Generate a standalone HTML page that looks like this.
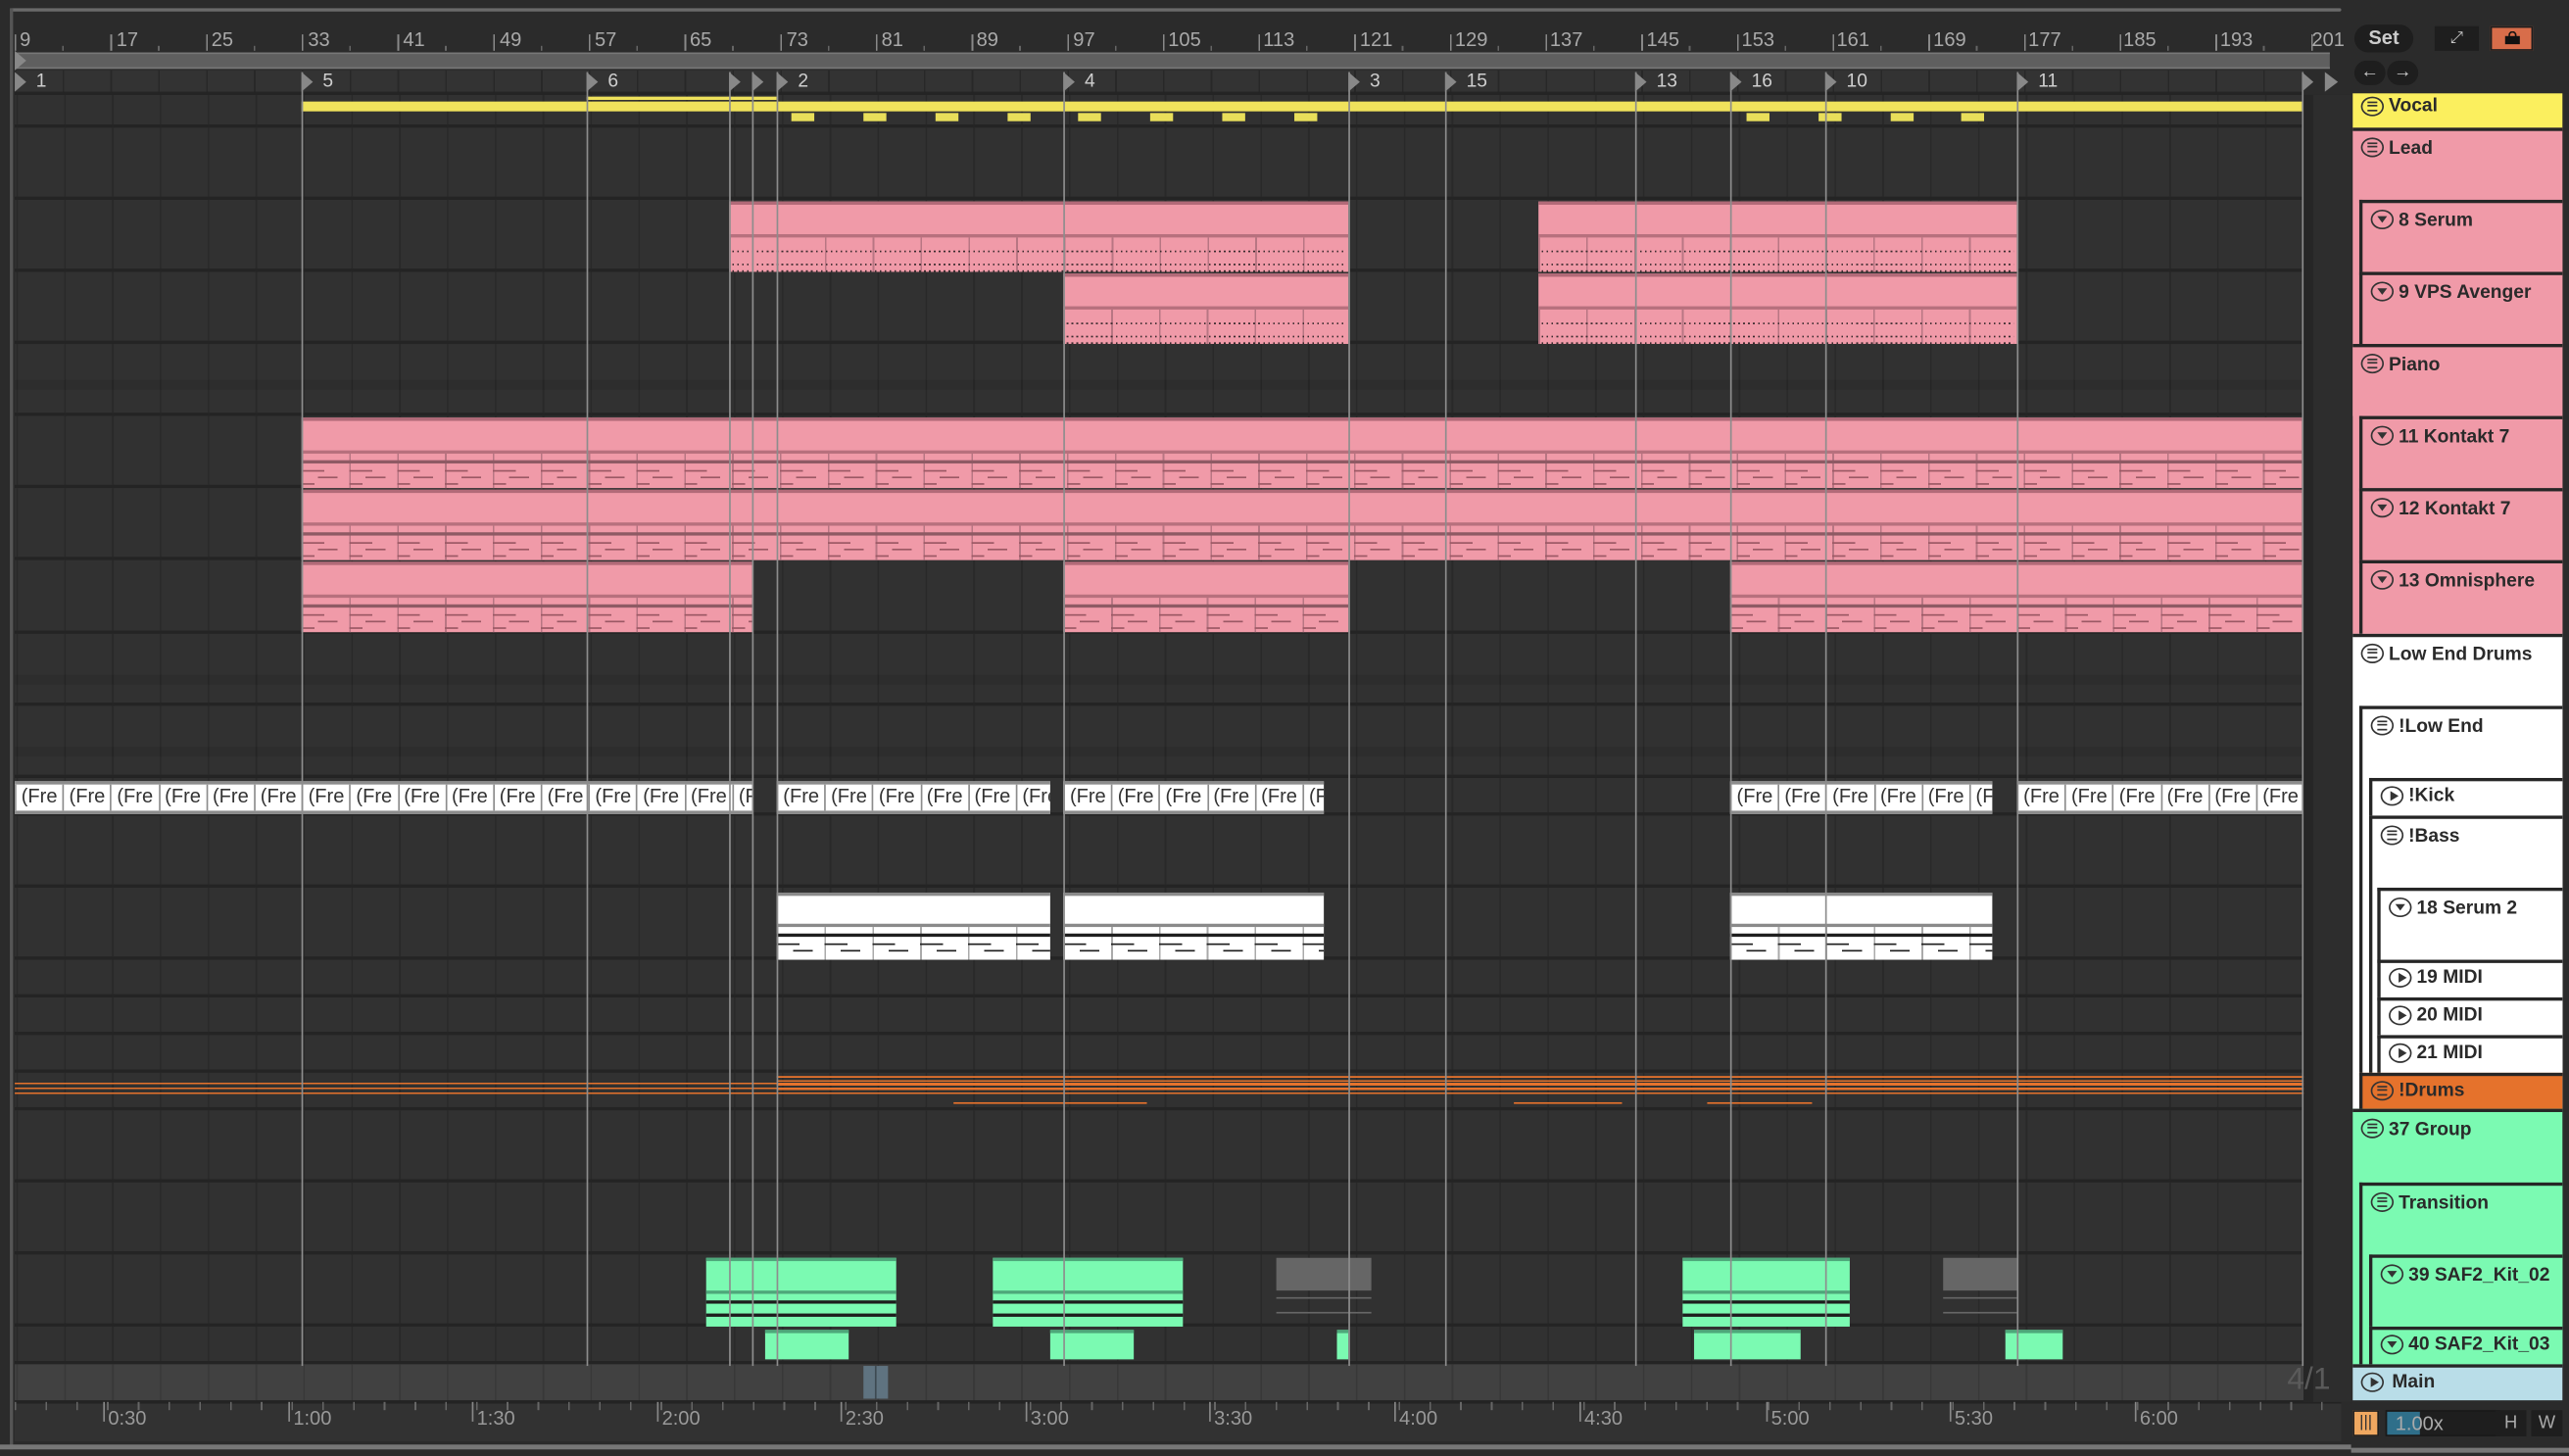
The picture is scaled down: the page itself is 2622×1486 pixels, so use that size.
<!DOCTYPE html>
<html><head><meta charset="utf-8">
<style>
*{margin:0;padding:0;box-sizing:border-box}
html,body{width:2622px;height:1486px;overflow:hidden;background:#2a2a2a}
#w{position:absolute;left:0;top:0;width:1568px;height:889px;transform:scale(1.67219,1.67154);transform-origin:0 0;background:#2b2b2b;font-family:"Liberation Sans",sans-serif}
.a{position:absolute}
.num{position:absolute;top:17px;font-family:"Liberation Sans Narrow","Liberation Sans",sans-serif;font-size:12px;color:#a9a9a9}
.row{position:absolute;left:9px;width:1397px;background:#313131;border-bottom:2px solid #242424;
 background-image:repeating-linear-gradient(90deg,#292929 0 1px,transparent 1px 29.2px);background-position:1px 0}
.loc{position:absolute;top:44px;width:1px;height:790px;background:#8d8d8d}
.pk{position:absolute;background:#f09aa8;border-top:2px solid #b26a78}
.pk .b{position:absolute;left:0;right:0;top:18px;bottom:0;border-top:2px solid #b7707d;
 background-image:repeating-linear-gradient(90deg,#b87683 0 1px,transparent 1px 29.2px)}
.dots{position:absolute;left:2px;right:2px;height:1px;background:repeating-linear-gradient(90deg,#3a2a2e 0 1px,transparent 1px 3px)}
.notes{position:absolute;left:0;right:0;top:4px;bottom:2px;background:
 repeating-linear-gradient(90deg,#9b5864 0 14px,transparent 14px 29.2px) 0 4px/100% 1px no-repeat,
 repeating-linear-gradient(90deg,transparent 0 10px,#9b5864 10px 22px,transparent 22px 29.2px) 0 8px/100% 1px no-repeat,
 repeating-linear-gradient(90deg,#9b5864 0 8px,transparent 8px 29.2px) 0 12px/100% 1px no-repeat,
 repeating-linear-gradient(90deg,transparent 0 16px,#9b5864 16px 26px,transparent 26px 29.2px) 0 16px/100% 1px no-repeat;
 border-top:2px solid #8e5a64}
.wh{position:absolute;background:#fff;border-top:2px solid #8a8a8a}
.fre{position:absolute;top:477px;height:20px;background:#fff;border-top:2px solid #8c8c8c;border-bottom:2px solid #8c8c8c;overflow:hidden;white-space:nowrap;display:flex}
.fre span{flex:0 0 29.2px;border-left:1px solid #8c8c8c;font-size:12px;color:#333;padding-left:3px;line-height:15px;overflow:hidden}
.gr{position:absolute;background:#7bfab2;border-top:2px solid #4ea77a}
.yb{position:absolute;top:69px;height:5px;width:14px;background:#e9df5a}
.tl{position:absolute;top:859px;font-family:"Liberation Sans Narrow","Liberation Sans",sans-serif;font-size:12px;color:#999}
.tl:before{content:"";position:absolute;left:-3px;top:-3px;width:1px;height:12px;background:#888}
.ph{position:absolute;height:44px;border-top:2px solid #262626;font-size:11.5px;font-weight:bold;color:#2a2a2a;padding:5px 0 0 22px;white-space:nowrap;overflow:hidden}
.ph.s{height:23px;padding-top:3px}
.ic{position:absolute;left:5px;top:4px;width:14px;height:12px;border:1.3px solid #333;border-radius:50%}
.s .ic{top:3px}
.ic.g:after{content:"";position:absolute;left:3px;top:2px;width:6px;height:4px;border-top:1px solid #333;border-bottom:1px solid #333}
.ic.g:before{content:"";position:absolute;left:3px;top:4px;width:6px;height:1px;background:#333}
.ic.d:after{content:"";position:absolute;left:3px;top:3px;border-left:3.5px solid transparent;border-right:3.5px solid transparent;border-top:4px solid #333}
.ic.p:after{content:"";position:absolute;left:4.5px;top:2px;border-top:3.5px solid transparent;border-bottom:3.5px solid transparent;border-left:5px solid #333}
</style></head><body><div id="w">

<div class="a" style="left:6px;top:5px;width:1423px;height:2px;background:#6a6a6a;border-radius:3px"></div>
<div class="a" style="left:6px;top:5px;width:2px;height:880px;background:#555"></div>
<div class="a" style="left:9px;top:32px;width:1413px;height:10px;background:#5f5f5f;border-top:1px solid #777;border-bottom:1px solid #777"></div>
<div class="a" style="left:9px;top:31px;width:0;height:0;border-top:6px solid transparent;border-bottom:6px solid transparent;border-left:7px solid #888"></div>

<div class="num" style="left:12px">9</div><div class="num" style="left:71px">17</div><div class="num" style="left:129px">25</div><div class="num" style="left:188px">33</div><div class="num" style="left:246px">41</div><div class="num" style="left:305px">49</div><div class="num" style="left:363px">57</div><div class="num" style="left:421px">65</div><div class="num" style="left:480px">73</div><div class="num" style="left:538px">81</div><div class="num" style="left:596px">89</div><div class="num" style="left:655px">97</div><div class="num" style="left:713px">105</div><div class="num" style="left:771px">113</div><div class="num" style="left:830px">121</div><div class="num" style="left:888px">129</div><div class="num" style="left:946px">137</div><div class="num" style="left:1005px">145</div><div class="num" style="left:1063px">153</div><div class="num" style="left:1121px">161</div><div class="num" style="left:1180px">169</div><div class="num" style="left:1238px">177</div><div class="num" style="left:1296px">185</div><div class="num" style="left:1355px">193</div><div class="num" style="left:1411px">201</div>
<div class="a" style="left:9px;top:21px;width:1415px;height:10px;background:repeating-linear-gradient(90deg,#888 0 1px,transparent 1px 58.4px),repeating-linear-gradient(90deg,transparent 0 29px,#666 29px 30px,transparent 30px 58.4px);background-size:100% 10px,100% 3px;background-position:0 0,0 7px;background-repeat:no-repeat"></div>

<div class="a" style="left:9px;top:43px;width:1397px;height:14px;background:#333;background-image:repeating-linear-gradient(90deg,#282828 0 1px,transparent 1px 29.2px)"></div>
<div class="a" style="left:9px;top:56px;width:1397px;height:2px;background:#242424"></div>

<div class="row" style="top:58px;height:20px"></div>
<div class="row" style="top:78px;height:44px"></div>
<div class="row" style="top:122px;height:44px"></div>
<div class="row" style="top:166px;height:44px"></div>
<div class="row" style="top:210px;height:44px"></div>
<div class="row" style="top:254px;height:44px"></div>
<div class="row" style="top:298px;height:44px"></div>
<div class="row" style="top:342px;height:45px"></div>
<div class="row" style="top:387px;height:44px"></div>
<div class="row" style="top:431px;height:44px"></div>
<div class="row" style="top:475px;height:23px"></div>
<div class="row" style="top:498px;height:44px"></div>
<div class="row" style="top:542px;height:44px"></div>
<div class="row" style="top:586px;height:23px"></div>
<div class="row" style="top:609px;height:23px"></div>
<div class="row" style="top:632px;height:23px"></div>
<div class="row" style="top:655px;height:23px"></div>
<div class="row" style="top:678px;height:44px"></div>
<div class="row" style="top:722px;height:44px"></div>
<div class="row" style="top:766px;height:44px"></div>
<div class="row" style="top:810px;height:23px"></div>
<div class="row" style="top:833px;height:23px;background-color:#414141;background-image:repeating-linear-gradient(90deg,#383838 0 1px,transparent 1px 29.2px);border-bottom:none"></div>
<div class="a" style="left:9px;top:855px;width:1420px;height:25px;background:#323232;border-top:2px solid #232323"></div>
<div class="a" style="left:9px;top:232px;width:1397px;height:6px;background:rgba(0,0,0,.08)"></div>
<div class="a" style="left:9px;top:412px;width:1397px;height:6px;background:rgba(0,0,0,.08)"></div>
<div class="a" style="left:9px;top:456px;width:1397px;height:6px;background:rgba(0,0,0,.08)"></div>

<div class="a" style="left:1406px;top:58px;width:29px;height:798px;background:#2d2d2d;background-image:linear-gradient(90deg,#262626 0 6px,transparent 6px)"></div>
<div class="a" style="left:1419px;top:44px;width:0;height:0;border-top:6px solid transparent;border-bottom:6px solid transparent;border-left:8px solid #888"></div>

<div class="a" style="left:184px;top:62px;width:1221px;height:6px;background:#f0e35c"></div>
<div class="a" style="left:358px;top:59px;width:116px;height:2px;background:#f0e35c"></div>
<div class="yb" style="left:483px"></div><div class="yb" style="left:527px"></div><div class="yb" style="left:571px"></div><div class="yb" style="left:615px"></div><div class="yb" style="left:658px"></div><div class="yb" style="left:702px"></div><div class="yb" style="left:746px"></div><div class="yb" style="left:790px"></div><div class="yb" style="left:1066px"></div><div class="yb" style="left:1110px"></div><div class="yb" style="left:1154px"></div><div class="yb" style="left:1197px"></div>

<div class="pk" style="left:445px;top:123px;width:378px;height:43px"><div class="b"><div class="dots" style="top:8px"></div><div class="dots" style="top:16px"></div><div class="dots" style="top:20px"></div></div></div>
<div class="pk" style="left:939px;top:123px;width:292px;height:43px"><div class="b"><div class="dots" style="top:8px"></div><div class="dots" style="top:16px"></div><div class="dots" style="top:20px"></div></div></div>
<div class="pk" style="left:649px;top:167px;width:174px;height:43px"><div class="b"><div class="dots" style="top:8px"></div><div class="dots" style="top:16px"></div><div class="dots" style="top:20px"></div></div></div>
<div class="pk" style="left:939px;top:167px;width:292px;height:43px"><div class="b"><div class="dots" style="top:8px"></div><div class="dots" style="top:16px"></div><div class="dots" style="top:20px"></div></div></div>
<div class="pk" style="left:184px;top:255px;width:1221px;height:43px"><div class="b"><div class="notes"></div></div></div>
<div class="pk" style="left:184px;top:299px;width:1221px;height:43px"><div class="b"><div class="notes"></div></div></div>
<div class="pk" style="left:184px;top:343px;width:275px;height:43px"><div class="b"><div class="notes"></div></div></div>
<div class="pk" style="left:649px;top:343px;width:174px;height:43px"><div class="b"><div class="notes"></div></div></div>
<div class="pk" style="left:1056px;top:343px;width:349px;height:43px"><div class="b"><div class="notes"></div></div></div>

<div class="fre" style="left:9px;width:450px"><span>(Fre</span><span>(Fre</span><span>(Fre</span><span>(Fre</span><span>(Fre</span><span>(Fre</span><span>(Fre</span><span>(Fre</span><span>(Fre</span><span>(Fre</span><span>(Fre</span><span>(Fre</span><span>(Fre</span><span>(Fre</span><span>(Fre</span><span>(Fre</span></div>
<div class="fre" style="left:474px;width:167px"><span>(Fre</span><span>(Fre</span><span>(Fre</span><span>(Fre</span><span>(Fre</span><span>(Fre</span></div>
<div class="fre" style="left:649px;width:159px"><span>(Fre</span><span>(Fre</span><span>(Fre</span><span>(Fre</span><span>(Fre</span><span>(Fre</span></div>
<div class="fre" style="left:1056px;width:160px"><span>(Fre</span><span>(Fre</span><span>(Fre</span><span>(Fre</span><span>(Fre</span><span>(Fre</span></div>
<div class="fre" style="left:1231px;width:174px"><span>(Fre</span><span>(Fre</span><span>(Fre</span><span>(Fre</span><span>(Fre</span><span>(Fre</span></div>

<div class="wh" style="left:474px;top:545px;width:167px;height:41px"><div class="a" style="left:0;right:0;top:17px;bottom:0;border-top:2px solid #8a8a8a;background-image:repeating-linear-gradient(90deg,#aaa 0 1px,transparent 1px 29.2px)"><div class="notes" style="filter:grayscale(1) brightness(.3)"></div></div></div>
<div class="wh" style="left:649px;top:545px;width:159px;height:41px"><div class="a" style="left:0;right:0;top:17px;bottom:0;border-top:2px solid #8a8a8a;background-image:repeating-linear-gradient(90deg,#aaa 0 1px,transparent 1px 29.2px)"><div class="notes" style="filter:grayscale(1) brightness(.3)"></div></div></div>
<div class="wh" style="left:1056px;top:545px;width:160px;height:41px"><div class="a" style="left:0;right:0;top:17px;bottom:0;border-top:2px solid #8a8a8a;background-image:repeating-linear-gradient(90deg,#aaa 0 1px,transparent 1px 29.2px)"><div class="notes" style="filter:grayscale(1) brightness(.3)"></div></div></div>

<div class="a" style="left:9px;top:661px;width:1397px;height:7px;background:repeating-linear-gradient(180deg,#e5722c 0 1px,transparent 1px 3px)"></div>
<div class="a" style="left:474px;top:657px;width:932px;height:12px;background:repeating-linear-gradient(180deg,#e5722c 0 1px,transparent 1px 2.5px)"></div>
<div class="a" style="left:582px;top:673px;width:118px;height:1px;background:#e5722c"></div>
<div class="a" style="left:924px;top:673px;width:66px;height:1px;background:#e5722c"></div>
<div class="a" style="left:1042px;top:673px;width:64px;height:1px;background:#e5722c"></div>

<div class="gr" style="left:431px;top:768px;width:116px;height:42px"><div class="a" style="left:0;right:0;top:18px;height:2px;background:#4ea77a"></div><div class="a" style="left:0;right:0;top:24px;height:2px;background:#1d1d1d"></div><div class="a" style="left:0;right:0;top:32px;height:2px;background:#1d1d1d"></div></div>
<div class="gr" style="left:606px;top:768px;width:116px;height:42px"><div class="a" style="left:0;right:0;top:18px;height:2px;background:#4ea77a"></div><div class="a" style="left:0;right:0;top:24px;height:2px;background:#1d1d1d"></div><div class="a" style="left:0;right:0;top:32px;height:2px;background:#1d1d1d"></div></div>
<div class="gr" style="left:1027px;top:768px;width:102px;height:42px"><div class="a" style="left:0;right:0;top:18px;height:2px;background:#4ea77a"></div><div class="a" style="left:0;right:0;top:24px;height:2px;background:#1d1d1d"></div><div class="a" style="left:0;right:0;top:32px;height:2px;background:#1d1d1d"></div></div>
<div class="a" style="left:779px;top:768px;width:58px;height:20px;background:#666"></div>
<div class="a" style="left:779px;top:792px;width:58px;height:1px;background:#666"></div><div class="a" style="left:779px;top:801px;width:58px;height:1px;background:#666"></div>
<div class="a" style="left:1186px;top:768px;width:45px;height:20px;background:#666"></div>
<div class="a" style="left:1186px;top:792px;width:45px;height:1px;background:#666"></div><div class="a" style="left:1186px;top:801px;width:45px;height:1px;background:#666"></div>
<div class="gr" style="left:467px;top:812px;width:51px;height:18px"></div>
<div class="gr" style="left:641px;top:812px;width:51px;height:18px"></div>
<div class="gr" style="left:816px;top:812px;width:7px;height:18px"></div>
<div class="gr" style="left:1034px;top:812px;width:65px;height:18px"></div>
<div class="gr" style="left:1224px;top:812px;width:35px;height:18px"></div>

<div class="a" style="left:527px;top:834px;width:15px;height:20px;background:#5f7380"></div>
<div class="a" style="left:534px;top:834px;width:1px;height:20px;background:#3d4a52"></div>

<div class="loc" style="left:184px"></div><div class="loc" style="left:358px"></div><div class="loc" style="left:445px"></div><div class="loc" style="left:459px"></div><div class="loc" style="left:474px"></div><div class="loc" style="left:649px"></div><div class="loc" style="left:823px"></div><div class="loc" style="left:882px"></div><div class="loc" style="left:998px"></div><div class="loc" style="left:1056px"></div><div class="loc" style="left:1114px"></div><div class="loc" style="left:1231px"></div><div class="loc" style="left:1405px"></div>
<div class="a" style="left:0;top:44px;width:1420px;height:13px;font-size:11.5px;color:#cfcfcf;font-family:'Liberation Sans Narrow','Liberation Sans',sans-serif">
<span class="a" style="left:9px;top:0;border-top:6px solid transparent;border-bottom:6px solid transparent;border-left:7px solid #888"></span><span class="a" style="left:22px;top:0">1</span>
<span class="a" style="left:184px;top:0;border-top:6px solid transparent;border-bottom:6px solid transparent;border-left:7px solid #888"></span><span class="a" style="left:197px;top:0">5</span>
<span class="a" style="left:358px;top:0;border-top:6px solid transparent;border-bottom:6px solid transparent;border-left:7px solid #888"></span><span class="a" style="left:371px;top:0">6</span>
<span class="a" style="left:445px;top:0;border-top:6px solid transparent;border-bottom:6px solid transparent;border-left:7px solid #888"></span>
<span class="a" style="left:459px;top:0;border-top:6px solid transparent;border-bottom:6px solid transparent;border-left:7px solid #888"></span>
<span class="a" style="left:474px;top:0;border-top:6px solid transparent;border-bottom:6px solid transparent;border-left:7px solid #888"></span><span class="a" style="left:487px;top:0">2</span>
<span class="a" style="left:649px;top:0;border-top:6px solid transparent;border-bottom:6px solid transparent;border-left:7px solid #888"></span><span class="a" style="left:662px;top:0">4</span>
<span class="a" style="left:823px;top:0;border-top:6px solid transparent;border-bottom:6px solid transparent;border-left:7px solid #888"></span><span class="a" style="left:836px;top:0">3</span>
<span class="a" style="left:882px;top:0;border-top:6px solid transparent;border-bottom:6px solid transparent;border-left:7px solid #888"></span><span class="a" style="left:895px;top:0">15</span>
<span class="a" style="left:998px;top:0;border-top:6px solid transparent;border-bottom:6px solid transparent;border-left:7px solid #888"></span><span class="a" style="left:1011px;top:0">13</span>
<span class="a" style="left:1056px;top:0;border-top:6px solid transparent;border-bottom:6px solid transparent;border-left:7px solid #888"></span><span class="a" style="left:1069px;top:0">16</span>
<span class="a" style="left:1114px;top:0;border-top:6px solid transparent;border-bottom:6px solid transparent;border-left:7px solid #888"></span><span class="a" style="left:1127px;top:0">10</span>
<span class="a" style="left:1231px;top:0;border-top:6px solid transparent;border-bottom:6px solid transparent;border-left:7px solid #888"></span><span class="a" style="left:1244px;top:0">11</span>
<span class="a" style="left:1405px;top:0;border-top:6px solid transparent;border-bottom:6px solid transparent;border-left:7px solid #888"></span>
</div>

<div class="a" style="left:9px;top:856px;width:1420px;height:5px;background:repeating-linear-gradient(90deg,#666 0 1px,transparent 1px 18.77px)"></div>
<div class="tl" style="left:66px">0:30</div><div class="tl" style="left:179px">1:00</div><div class="tl" style="left:291px">1:30</div><div class="tl" style="left:404px">2:00</div><div class="tl" style="left:516px">2:30</div><div class="tl" style="left:629px">3:00</div><div class="tl" style="left:741px">3:30</div><div class="tl" style="left:854px">4:00</div><div class="tl" style="left:967px">4:30</div><div class="tl" style="left:1081px">5:00</div><div class="tl" style="left:1193px">5:30</div><div class="tl" style="left:1306px">6:00</div>
<div class="a" style="left:0;top:882px;width:1435px;height:3px;background:#777"></div>
<div class="a" style="left:1396px;top:832px;font-size:19px;color:#5a5a5a">4/1</div>

<div class="a" style="left:1437px;top:15px;width:36px;height:17px;border-radius:9px;background:#1e1e1e;color:#ccc;font-size:12px;font-weight:bold;text-align:center;line-height:17px">Set</div>
<div class="a" style="left:1486px;top:16px;width:27px;height:15px;background:#1e1e1e;color:#ccc;font-size:10px;text-align:center;line-height:15px">⤢</div>
<div class="a" style="left:1520px;top:16px;width:26px;height:15px;background:#d86d4a;border:1.5px solid #1e1e1e"><div class="a" style="left:8px;top:5px;width:9px;height:5px;background:#111"></div><div class="a" style="left:10px;top:2px;width:5px;height:4px;border:1.5px solid #111;border-bottom:none;border-radius:3px 3px 0 0"></div></div>
<div class="a" style="left:1437px;top:37px;width:19px;height:15px;border-radius:8px;background:#1e1e1e;color:#ccc;font-size:11px;text-align:center;line-height:15px">←</div>
<div class="a" style="left:1457px;top:37px;width:19px;height:15px;border-radius:8px;background:#1e1e1e;color:#ccc;font-size:11px;text-align:center;line-height:15px">→</div>

<div class="a" style="left:1435px;top:57px;width:133px;height:800px;background:#2b2b2b"></div>
<div class="ph s" style="left:1436px;top:57px;width:128px;height:21px;background:#fbef5e;border-top:none;padding-top:2px"><i class="ic g" style="top:2px"></i>Vocal</div>
<div class="ph" style="left:1436px;top:78px;width:128px;height:309px;background:#f09aa8"><i class="ic g"></i>Lead</div>
<div class="ph" style="left:1440px;top:122px;width:124px;background:#f09aa8;border-left:2px solid #262626"><i class="ic d"></i>8 Serum</div>
<div class="ph" style="left:1440px;top:166px;width:124px;background:#f09aa8;border-left:2px solid #262626"><i class="ic d"></i>9 VPS Avenger</div>
<div class="ph" style="left:1436px;top:210px;width:128px;background:#f09aa8"><i class="ic g"></i>Piano</div>
<div class="ph" style="left:1440px;top:254px;width:124px;background:#f09aa8;border-left:2px solid #262626"><i class="ic d"></i>11 Kontakt 7</div>
<div class="ph" style="left:1440px;top:298px;width:124px;background:#f09aa8;border-left:2px solid #262626"><i class="ic d"></i>12 Kontakt 7</div>
<div class="ph" style="left:1440px;top:342px;width:124px;height:45px;background:#f09aa8;border-left:2px solid #262626"><i class="ic d"></i>13 Omnisphere</div>
<div class="ph" style="left:1436px;top:387px;width:128px;height:290px;background:#fff"><i class="ic g"></i>Low End Drums</div>
<div class="ph" style="left:1440px;top:431px;width:124px;height:224px;background:#fff;border-left:2px solid #262626"><i class="ic g"></i>!Low End</div>
<div class="ph s" style="left:1446px;top:475px;width:118px;background:#fff;border-left:2px solid #262626"><i class="ic p"></i>!Kick</div>
<div class="ph" style="left:1446px;top:498px;width:118px;height:157px;background:#fff;border-left:2px solid #262626"><i class="ic g"></i>!Bass</div>
<div class="ph" style="left:1451px;top:542px;width:113px;background:#fff;border-left:2px solid #262626"><i class="ic d"></i>18 Serum 2</div>
<div class="ph s" style="left:1451px;top:586px;width:113px;background:#fff;border-left:2px solid #262626"><i class="ic p"></i>19 MIDI</div>
<div class="ph s" style="left:1451px;top:609px;width:113px;background:#fff;border-left:2px solid #262626"><i class="ic p"></i>20 MIDI</div>
<div class="ph s" style="left:1451px;top:632px;width:113px;background:#fff;border-left:2px solid #262626"><i class="ic p"></i>21 MIDI</div>
<div class="ph s" style="left:1440px;top:655px;width:124px;background:#e5722c;border-left:2px solid #262626"><i class="ic g"></i>!Drums</div>
<div class="ph" style="left:1436px;top:677px;width:128px;height:156px;background:#7bfab2"><i class="ic g"></i>37 Group</div>
<div class="ph" style="left:1440px;top:722px;width:124px;height:111px;background:#7bfab2;border-left:2px solid #262626"><i class="ic g"></i>Transition</div>
<div class="ph" style="left:1446px;top:766px;width:118px;background:#7bfab2;border-left:2px solid #262626"><i class="ic d"></i>39 SAF2_Kit_02</div>
<div class="ph s" style="left:1446px;top:810px;width:118px;background:#7bfab2;border-left:2px solid #262626"><i class="ic d"></i>40 SAF2_Kit_03</div>
<div class="ph s" style="left:1436px;top:833px;width:128px;height:22px;background:#b9dde8;padding-left:24px"><i class="ic p"></i>Main</div>

<div class="a" style="left:1436px;top:861px;width:16px;height:16px;background:#f0a860;border:1px solid #1e1e1e;text-align:center;font-size:10px;line-height:14px;color:#333">|||</div>
<div class="a" style="left:1456px;top:861px;width:70px;height:16px;background:#1e1e1e;border:1px solid #1a1a1a"><div class="a" style="left:0;top:0;width:20px;height:14px;background:#2f6f8a"></div><span class="a" style="left:5px;top:0;font-size:12px;color:#aaa">1.00x</span></div>
<div class="a" style="left:1523px;top:861px;width:19px;height:16px;background:#1e1e1e;color:#aaa;font-size:11px;text-align:center;line-height:16px">H</div>
<div class="a" style="left:1545px;top:861px;width:19px;height:16px;background:#1e1e1e;color:#aaa;font-size:11px;text-align:center;line-height:16px">W</div>
<div class="a" style="left:1435px;top:884px;width:133px;height:3px;background:#777"></div>

</div></body></html>
